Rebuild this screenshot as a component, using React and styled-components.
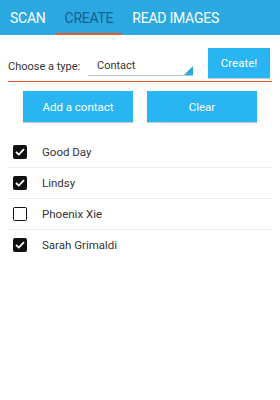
import styled, { createGlobalStyle } from 'styled-components';

const contacts = [
  { id: 1, name: 'Good Day', checked: true },
  { id: 2, name: 'Lindsy', checked: true },
  { id: 3, name: 'Phoenix Xie', checked: false },
  { id: 4, name: 'Sarah Grimaldi', checked: true },
];

export default function App() {
  return (
    <>
      <GlobalStyle />
      <Screen>
        <TabBar>
          <Tab>SCAN</Tab>
          <Tab $active>CREATE</Tab>
          <Tab>READ IMAGES</Tab>
        </TabBar>
        <TypeRow>
          <Label>Choose a type:</Label>
          <Spinner>
            Contact
            <Corner />
          </Spinner>
          <CreateButton>Create!</CreateButton>
        </TypeRow>
        <Actions>
          <ActionButton>Add a contact</ActionButton>
          <ActionButton>Clear</ActionButton>
        </Actions>
        <List>
          {contacts.map(contact => (
            <Row key={contact.id}>
              <Box $checked={contact.checked}>
                {contact.checked && (
                  <svg width="10" height="8" viewBox="0 0 10 8">
                    <path
                      d="M1 4 L3.8 6.6 L9 1.2"
                      fill="none"
                      stroke="#fff"
                      strokeWidth="1.8"
                    />
                  </svg>
                )}
              </Box>
              <Name>{contact.name}</Name>
            </Row>
          ))}
        </List>
      </Screen>
    </>
  );
}

const GlobalStyle = createGlobalStyle`
  body {
    margin: 0;
    background: #fff;
    font-family: Roboto, "Liberation Sans", sans-serif;
  }
`;

const Screen = styled.div`
  width: 280px;
  height: 400px;
  background: #fff;
`;

const TabBar = styled.div`
  display: flex;
  height: 35px;
  background: #2aa8e0;
  padding-left: 1px;
`;

const Tab = styled.div`
  display: flex;
  align-items: center;
  padding: 2px 9px 0;
  margin-right: 1px;
  font-size: 14px;
  letter-spacing: -0.25px;
  color: ${p => (p.$active ? '#1a5f96' : '#fff')};
  border-bottom: 2px solid ${p => (p.$active ? '#e8582f' : 'transparent')};
  box-sizing: border-box;
`;

const TypeRow = styled.div`
  display: flex;
  align-items: center;
  margin: 0 8px;
  padding: 13px 0 3px;
  border-bottom: 1.5px solid #e8582f;
`;

const Label = styled.span`
  font-size: 11px;
  color: #333;
  width: 80px;
  margin-top: 6px;
`;

const Spinner = styled.div`
  position: relative;
  width: 96px;
  margin-right: 15px;
  margin-top: 6px;
  padding: 0 0 1px 9px;
  font-size: 11px;
  color: #333;
  border-bottom: 1px solid #b8c6d0;
  height: 17px;
  line-height: 17px;
`;

const Corner = styled.div`
  position: absolute;
  right: 0;
  bottom: 0;
  width: 0;
  height: 0;
  border-left: 9px solid transparent;
  border-bottom: 9px solid #2aa8e0;
`;

const CreateButton = styled.div`
  width: 62px;
  height: 30px;
  display: flex;
  align-items: center;
  justify-content: center;
  background: #29b4f2;
  color: #fff;
  font-size: 11.5px;
  box-shadow: 0 1px 1px rgba(0, 0, 0, 0.2);
`;

const Actions = styled.div`
  display: flex;
  justify-content: center;
  gap: 14px;
  padding-top: 9px;
  padding-bottom: 14px;
`;

const ActionButton = styled.div`
  width: 110px;
  height: 31px;
  display: flex;
  align-items: center;
  justify-content: center;
  background: #29b4f2;
  color: #fff;
  font-size: 11.5px;
  box-shadow: 0 1px 1px rgba(0, 0, 0, 0.2);
`;

const List = styled.div`
  margin: 0 8px;
`;

const Row = styled.div`
  display: flex;
  align-items: center;
  height: 30px;
  &:first-child {
    margin-top: 1px;
  }
  &:not(:last-child) {
    border-bottom: 1px solid #f2eaea;
  }
`;

const Box = styled.div`
  width: 14px;
  height: 14px;
  margin-left: 5px;
  margin-right: 15px;
  box-sizing: border-box;
  border-radius: 1.5px;
  display: flex;
  align-items: center;
  justify-content: center;
  background: ${p => (p.$checked ? '#111' : '#fff')};
  border: 1.5px solid #111;
`;

const Name = styled.span`
  font-size: 11.5px;
  color: #333;
`;
